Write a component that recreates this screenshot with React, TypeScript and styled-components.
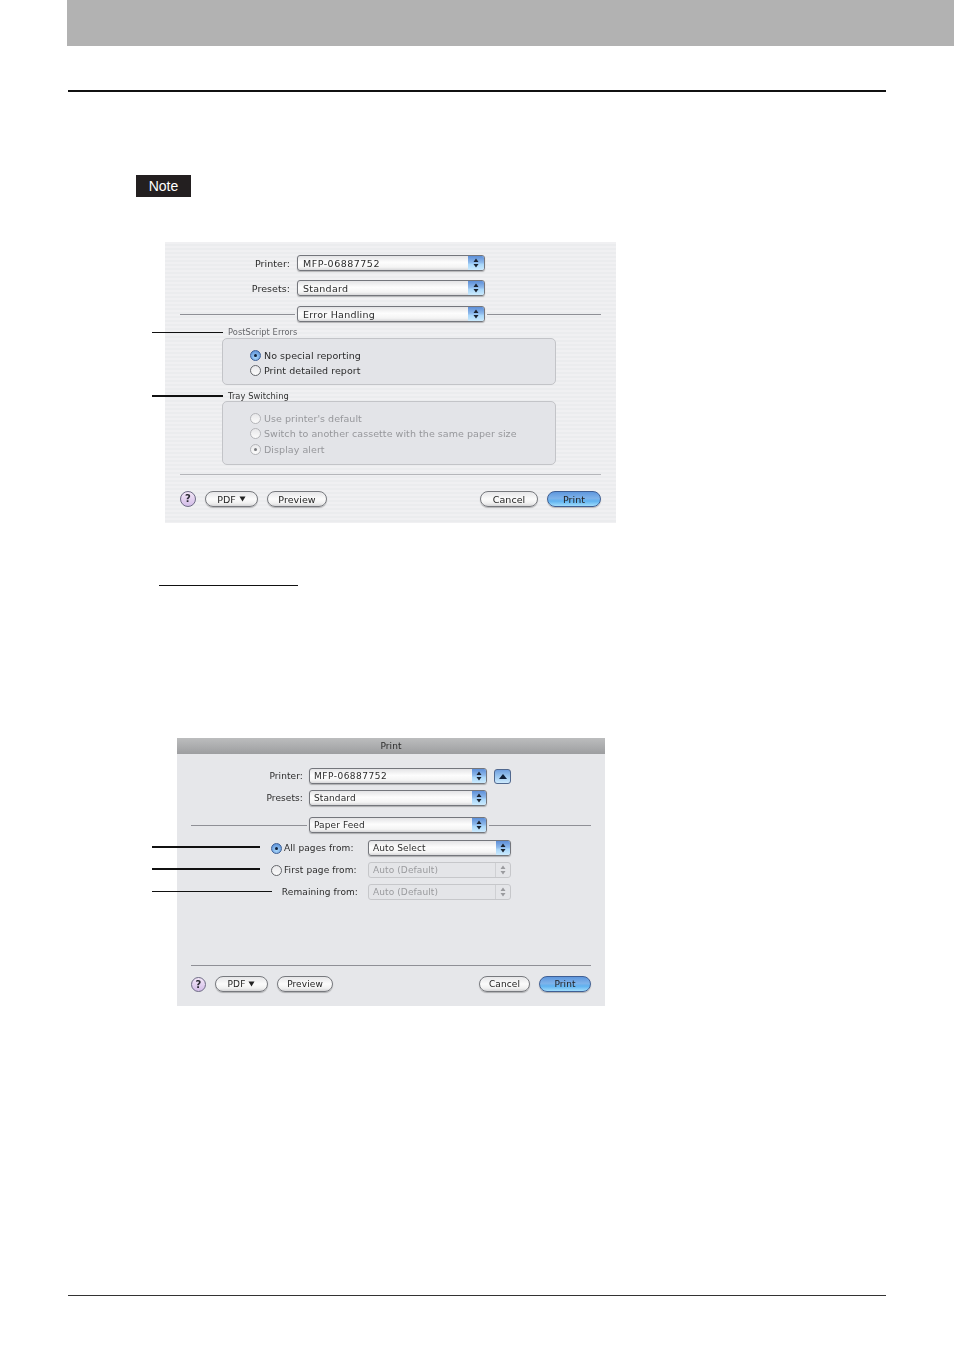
import React from 'react'
import styled, { createGlobalStyle } from 'styled-components'

const GlobalStyle = createGlobalStyle`
  html, body { margin: 0; padding: 0; background: #fff; }
  body { font-family: "DejaVu Sans", "Liberation Sans", sans-serif; }
`

const Page = styled.div`
  width: 954px;
  height: 1350px;
  overflow: hidden;
`

const TopBand = styled.div`
  height: 46px;
  margin-left: 67px;
  background: #b2b2b2;
`

const HeaderRule = styled.div`
  height: 2px;
  width: 818px;
  margin: 44px 0 0 68px;
  background: #111;
`

const NoteTag = styled.div`
  width: 55px;
  height: 22px;
  margin: 83px 0 0 136px;
  background: #231f20;
  color: #fff;
  font: 14px/22px "Liberation Sans", Arial, sans-serif;
  text-align: center;
`

const Dialog = styled.div<{ $width: number; $height: number; $left: number; $top: number; $compact?: boolean }>`
  position: relative;
  width: ${({ $width }) => $width}px;
  height: ${({ $height }) => $height}px;
  margin: ${({ $top }) => $top}px 0 0 ${({ $left }) => $left}px;
  box-sizing: border-box;
  display: flex;
  flex-direction: column;
  color: #2b2b2b;
  font-size: ${({ $compact }) => ($compact ? 9 : 9.5)}px;
  letter-spacing: ${({ $compact }) => ($compact ? 0.1 : 0.05)}px;
  filter: blur(0.3px);
  background: ${({ $compact }) =>
    $compact ? '#e6e7ea' : 'repeating-linear-gradient(180deg, #f0f0f2 0 2px, #ebecee 2px 4px)'};
`

const TitleBar = styled.div`
  height: 16px;
  line-height: 16px;
  text-align: center;
  color: #2b2b2b;
  background: linear-gradient(180deg, #bcbdbe 0%, #9d9ea0 100%);
`

const FormRow = styled.div<{ $label: number; $gap: number; $top: number }>`
  display: flex;
  align-items: center;
  height: 16px;
  margin-top: ${({ $top }) => $top}px;
  gap: ${({ $gap }) => $gap}px;
  & > label {
    width: ${({ $label }) => $label}px;
    text-align: right;
  }
`

const SelectBox = styled.div<{ $width: number; $disabled?: boolean; $compact?: boolean }>`
  width: ${({ $width }) => $width}px;
  height: 16px;
  box-sizing: border-box;
  flex: none;
  display: flex;
  align-items: center;
  justify-content: space-between;
  border: 1px solid ${({ $disabled }) => ($disabled ? '#c6c7ca' : '#74767c')};
  border-radius: 3px;
  overflow: hidden;
  color: ${({ $disabled }) => ($disabled ? '#9a9b9e' : '#2b2b2b')};
  background: ${({ $disabled }) =>
    $disabled ? '#e4e5e8' : 'linear-gradient(180deg, #e4e4e6 0%, #fdfdfd 45%, #f4f4f4 80%, #d8d8da 100%)'};
  box-shadow: ${({ $disabled }) => ($disabled ? 'none' : '0 1px 1px rgba(0, 0, 0, 0.25)')};
  padding-left: ${({ $compact }) => ($compact ? 4 : 5)}px;
  letter-spacing: ${({ $compact }) => ($compact ? 0.1 : 0.25)}px;
`

const SelectValue = styled.span<{ $wide?: boolean }>`
  letter-spacing: ${({ $wide }) => ($wide ? '0.5px' : 'inherit')};
`

const Stepper = styled.div<{ $disabled?: boolean; $compact?: boolean }>`
  width: ${({ $compact }) => ($compact ? 14 : 16)}px;
  height: 100%;
  flex: none;
  display: flex;
  align-items: center;
  justify-content: center;
  border-left: ${({ $disabled }) => ($disabled ? '1px solid #cfd0d3' : 'none')};
  background: ${({ $disabled }) =>
    $disabled ? 'transparent' : 'linear-gradient(180deg, #5d8fd8 0%, #8db8ea 45%, #a9d7fa 60%, #cbeafd 100%)'};
`

const Arrows = ({ color }: { color: string }) => (
  <svg width="6" height="10" viewBox="0 0 6 10">
    <path d="M3 0.5 L5.5 4 H0.5 Z M3 9.5 L0.5 6 H5.5 Z" fill={color} />
  </svg>
)

type SelectProps = { width: number; value: string; disabled?: boolean; compact?: boolean; wide?: boolean }

const Select = ({ width, value, disabled, compact, wide }: SelectProps) => (
  <SelectBox $width={width} $disabled={disabled} $compact={compact}>
    <SelectValue $wide={wide}>{value}</SelectValue>
    <Stepper $disabled={disabled} $compact={compact}>
      <Arrows color={disabled ? '#9a9b9e' : '#1c2430'} />
    </Stepper>
  </SelectBox>
)

const DisclosureButton = styled.div`
  width: 17px;
  height: 15px;
  margin-left: 1px;
  box-sizing: border-box;
  display: flex;
  align-items: center;
  justify-content: center;
  border: 1px solid #50688f;
  border-radius: 3px;
  background: linear-gradient(180deg, #6f9fdf 0%, #9cc7f0 50%, #cdeafd 100%);
`

const SeparatorRow = styled.div<{ $inset: number; $top: number; $lead: number }>`
  display: flex;
  align-items: center;
  gap: 2px;
  height: 16px;
  margin: ${({ $top }) => $top}px ${({ $inset }) => $inset}px 0;
  &::before {
    content: '';
    flex: 0 0 ${({ $lead }) => $lead}px;
    height: 1px;
    background: #8f9096;
  }
  &::after {
    content: '';
    flex: 1;
    height: 1px;
    background: #8f9096;
  }
`

const GroupLabel = styled.div<{ $top: number; $muted?: boolean }>`
  position: relative;
  height: 9px;
  line-height: 9px;
  margin: ${({ $top }) => $top}px 0 0 63px;
  font-size: 8.3px;
  color: ${({ $muted }) => ($muted ? '#66676b' : '#333')};
`

const Leader = styled.span<{ $left: number; $width: number; $thick?: boolean }>`
  position: absolute;
  top: 50%;
  left: ${({ $left }) => $left}px;
  width: ${({ $width }) => $width}px;
  height: ${({ $thick }) => ($thick ? 2 : 1)}px;
  margin-top: ${({ $thick }) => ($thick ? -2 : -1)}px;
  background: #111;
`

const GroupBox = styled.div<{ $height: number; $top: number; $muted?: boolean }>`
  width: 334px;
  height: ${({ $height }) => $height}px;
  margin: ${({ $top }) => $top}px 0 0 57px;
  box-sizing: border-box;
  padding: 10px 0 0 27px;
  display: flex;
  flex-direction: column;
  gap: 3.5px;
  border: 1px solid #c3c4c8;
  border-radius: 5px;
  background: #e3e4e8;
  color: ${({ $muted }) => ($muted ? '#96979b' : '#2b2b2b')};
`

const RadioRow = styled.div`
  display: flex;
  align-items: center;
  gap: 3px;
  height: 12px;
`

const RadioDot = styled.span<{ $on?: boolean; $muted?: boolean }>`
  position: relative;
  flex: none;
  width: 11px;
  height: 11px;
  box-sizing: border-box;
  border-radius: 50%;
  border: 1px solid ${({ $on, $muted }) => ($muted ? '#b4b5b9' : $on ? '#3c5f96' : '#65676c')};
  background: ${({ $on, $muted }) =>
    $on && !$muted ? 'radial-gradient(circle at 50% 70%, #a8d6fa, #4f86d2)' : 'linear-gradient(180deg, #e8e8ea, #fbfbfb)'};
  &::after {
    content: '';
    display: ${({ $on }) => ($on ? 'block' : 'none')};
    position: absolute;
    left: 3px;
    top: 3px;
    width: 3px;
    height: 3px;
    border-radius: 50%;
    background: ${({ $muted }) => ($muted ? '#77787c' : '#10203a')};
  }
`

const Divider = styled.div<{ $inset: number; $top: number; $color: string }>`
  height: 1px;
  margin: ${({ $top }) => $top}px ${({ $inset }) => $inset}px 0;
  background: ${({ $color }) => $color};
`

const ButtonBar = styled.div<{ $inset: number; $top: number; $gap: number }>`
  display: flex;
  align-items: center;
  gap: ${({ $gap }) => $gap}px;
  height: 16px;
  margin: ${({ $top }) => $top}px ${({ $inset }) => $inset}px 0;
`

const HelpButton = styled.div<{ $size: number }>`
  width: ${({ $size }) => $size}px;
  height: ${({ $size }) => $size}px;
  box-sizing: border-box;
  flex: none;
  border-radius: 50%;
  border: 1px solid #6d6a85;
  background: linear-gradient(180deg, #f3e6f7 0%, #d3bde8 100%);
  color: #2a2a33;
  font-size: 10px;
  font-weight: bold;
  line-height: 14px;
  text-align: center;
`

const PillButton = styled.div<{ $width: number; $primary?: boolean; $push?: boolean }>`
  width: ${({ $width }) => $width}px;
  height: 16px;
  box-sizing: border-box;
  flex: none;
  margin-left: ${({ $push }) => ($push ? 'auto' : '0')};
  display: flex;
  align-items: center;
  justify-content: center;
  gap: 3px;
  border-radius: 8px;
  border: 1px solid ${({ $primary }) => ($primary ? '#3f5f94' : '#77797e')};
  background: ${({ $primary }) =>
    $primary
      ? 'linear-gradient(180deg, #5f97dd 0%, #7fb3ea 45%, #5fb2f0 65%, #9fdcfb 100%)'
      : 'linear-gradient(180deg, #e6e6e8 0%, #fbfbfb 50%, #f0f0f0 80%, #d4d4d6 100%)'};
  box-shadow: 0 1px 1px rgba(0, 0, 0, 0.25);
  color: #222;
`

const DownMark = () => (
  <svg width="7" height="6" viewBox="0 0 7 6">
    <path d="M0.5 0.5 H6.5 L3.5 5.5 Z" fill="#222" />
  </svg>
)

const LinkRule = styled.div`
  width: 139px;
  height: 1px;
  margin: 62px 0 0 159px;
  background: #111;
`

const FeedRow = styled.div<{ $top: number }>`
  position: relative;
  display: flex;
  align-items: center;
  gap: 7px;
  height: 16px;
  margin: ${({ $top }) => $top}px 0 0 94px;
`

const FeedLabel = styled.div<{ $right?: boolean }>`
  width: 90px;
  flex: none;
  display: flex;
  align-items: center;
  gap: 2px;
  justify-content: ${({ $right }) => ($right ? 'flex-end' : 'flex-start')};
  padding-right: 3px;
  box-sizing: border-box;
  white-space: nowrap;
`

const FooterRule = styled.div`
  width: 818px;
  height: 1px;
  margin: 289px 0 0 68px;
  background: #333;
`

const ErrorHandlingDialog = () => (
  <Dialog $width={451} $height={281} $left={165} $top={45}>
    <FormRow $label={125} $gap={7} $top={13}>
      <label>Printer:</label>
      <Select width={188} value="MFP-06887752" wide />
    </FormRow>
    <FormRow $label={125} $gap={7} $top={9}>
      <label>Presets:</label>
      <Select width={188} value="Standard" />
    </FormRow>
    <SeparatorRow $inset={15} $top={10} $lead={115}>
      <Select width={188} value="Error Handling" />
    </SeparatorRow>
    <GroupLabel $top={6} $muted>
      <Leader $left={-76} $width={71} />
      PostScript Errors
    </GroupLabel>
    <GroupBox $height={47} $top={1}>
      <RadioRow><RadioDot $on />No special reporting</RadioRow>
      <RadioRow><RadioDot />Print detailed report</RadioRow>
    </GroupBox>
    <GroupLabel $top={7}>
      <Leader $left={-76} $width={71} $thick />
      Tray Switching
    </GroupLabel>
    <GroupBox $height={64} $top={0} $muted>
      <RadioRow><RadioDot $muted />Use printer's default</RadioRow>
      <RadioRow><RadioDot $muted />Switch to another cassette with the same paper size</RadioRow>
      <RadioRow><RadioDot $muted $on />Display alert</RadioRow>
    </GroupBox>
    <Divider $inset={15} $top={9} $color="#b5b6ba" />
    <ButtonBar $inset={15} $top={16} $gap={9}>
      <HelpButton $size={16}>?</HelpButton>
      <PillButton $width={53}>PDF <DownMark /></PillButton>
      <PillButton $width={60}>Preview</PillButton>
      <PillButton $width={58} $push>Cancel</PillButton>
      <PillButton $width={54} $primary>Print</PillButton>
    </ButtonBar>
  </Dialog>
)

const PaperFeedDialog = () => (
  <Dialog $width={428} $height={268} $left={177} $top={152} $compact>
    <TitleBar>Print</TitleBar>
    <FormRow $label={126} $gap={6} $top={14}>
      <label>Printer:</label>
      <Select width={178} value="MFP-06887752" compact wide />
      <DisclosureButton>
        <svg width="8" height="5" viewBox="0 0 8 5">
          <path d="M4 0 L8 5 H0 Z" fill="#10203a" />
        </svg>
      </DisclosureButton>
    </FormRow>
    <FormRow $label={126} $gap={6} $top={6}>
      <label>Presets:</label>
      <Select width={178} value="Standard" compact />
    </FormRow>
    <SeparatorRow $inset={14} $top={11} $lead={116}>
      <Select width={178} value="Paper Feed" compact />
    </SeparatorRow>
    <FeedRow $top={7}>
      <Leader $left={-119} $width={108} $thick />
      <FeedLabel><RadioDot $on />All pages from:</FeedLabel>
      <Select width={143} value="Auto Select" compact />
    </FeedRow>
    <FeedRow $top={6}>
      <Leader $left={-119} $width={108} $thick />
      <FeedLabel><RadioDot />First page from:</FeedLabel>
      <Select width={143} value="Auto (Default)" disabled compact />
    </FeedRow>
    <FeedRow $top={6}>
      <Leader $left={-119} $width={120} />
      <FeedLabel $right>Remaining from:</FeedLabel>
      <Select width={143} value="Auto (Default)" disabled compact />
    </FeedRow>
    <Divider $inset={14} $top={65} $color="#8f9096" />
    <ButtonBar $inset={14} $top={10} $gap={9}>
      <HelpButton $size={15}>?</HelpButton>
      <PillButton $width={53}>PDF <DownMark /></PillButton>
      <PillButton $width={56}>Preview</PillButton>
      <PillButton $width={51} $push>Cancel</PillButton>
      <PillButton $width={52} $primary>Print</PillButton>
    </ButtonBar>
  </Dialog>
)

export default function App() {
  return (
    <Page>
      <GlobalStyle />
      <TopBand />
      <HeaderRule />
      <NoteTag>Note</NoteTag>
      <ErrorHandlingDialog />
      <LinkRule />
      <PaperFeedDialog />
      <FooterRule />
    </Page>
  )
}
